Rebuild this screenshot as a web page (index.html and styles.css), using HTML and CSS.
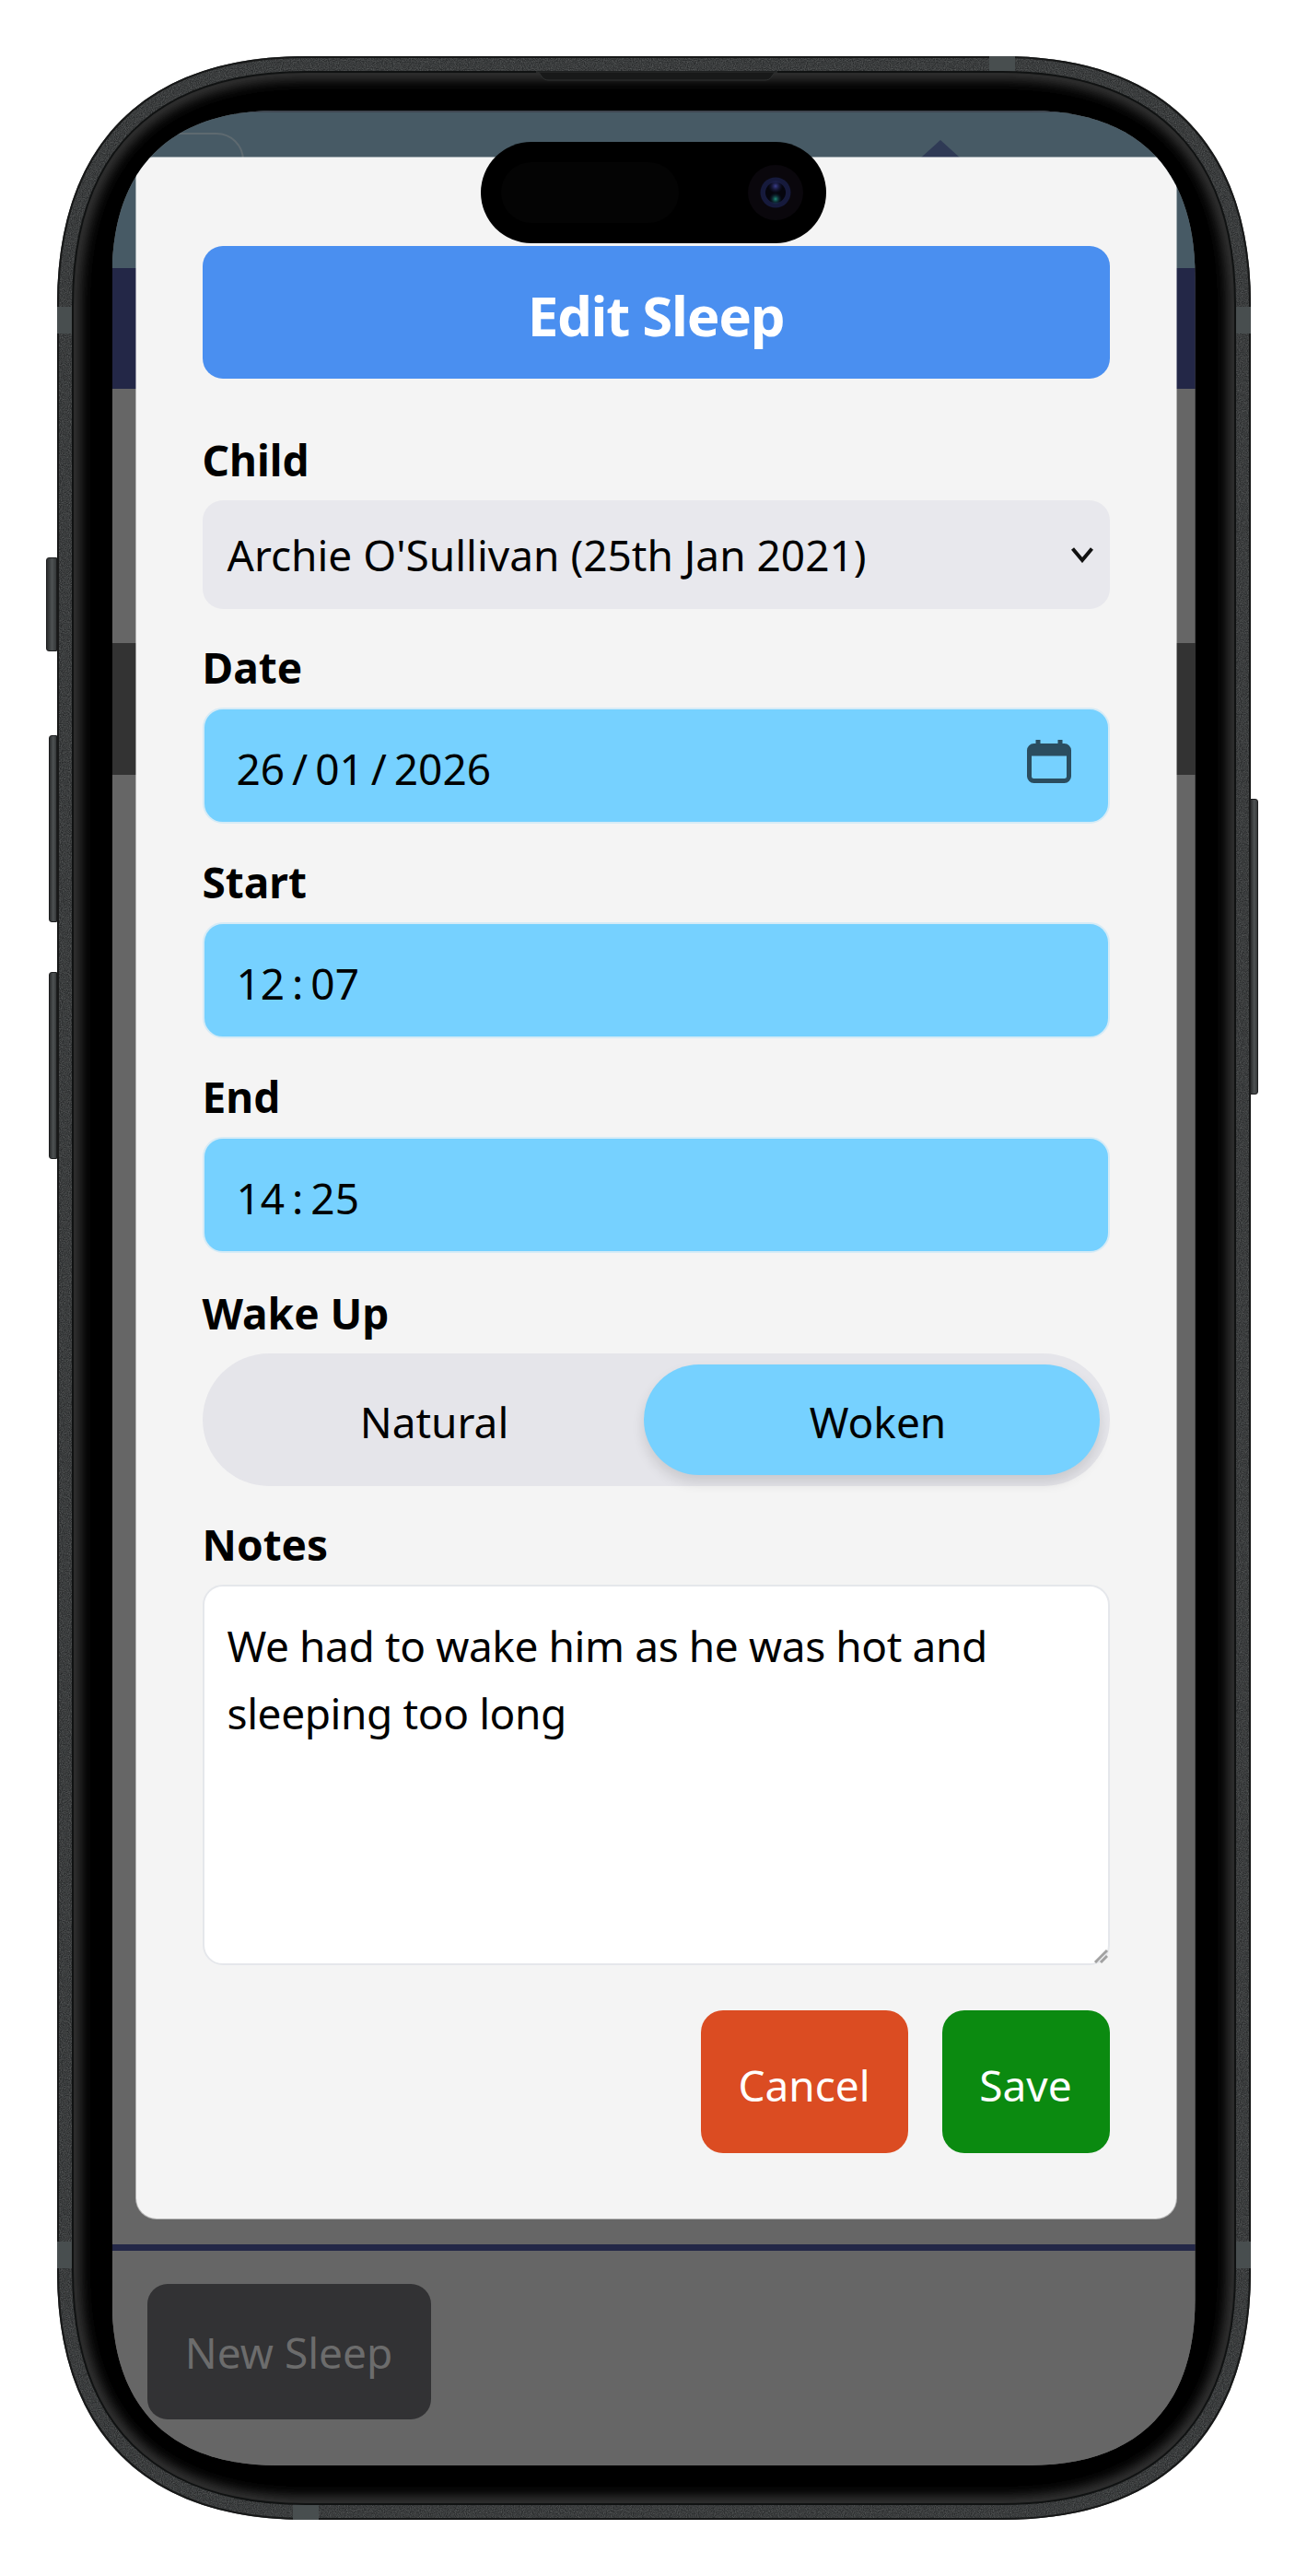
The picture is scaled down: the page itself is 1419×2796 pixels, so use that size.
FILE: index.html
```html
<!DOCTYPE html>
<html lang="en">
<head>
<meta charset="utf-8">
<title>Edit Sleep</title>
<link rel="stylesheet" href="styles.css">
</head>
<body>
<div class="phone">
  <svg class="phone-body" viewBox="0 0 1296 2674" aria-hidden="true">
    <defs>
      <filter id="grain" x="0" y="0" width="100%" height="100%" color-interpolation-filters="sRGB">
        <feTurbulence type="fractalNoise" baseFrequency="0.9" numOctaves="2" seed="4"/>
        <feColorMatrix values="0 0 0 0 0.42  0 0 0 0 0.43  0 0 0 0 0.43  1.1 0 0 0 -0.3"/>
        <feComposite in2="SourceGraphic" operator="in"/>
        <feMerge><feMergeNode in="SourceGraphic"/><feMergeNode/></feMerge>
      </filter>
      <filter id="soft"><feGaussianBlur stdDeviation="7"/></filter>
      <clipPath id="inner-clip"><path transform="translate(17 17)" d="M0 253C0 88 88 0 253 0H1009C1174 0 1262 88 1262 253V2387C1262 2552 1174 2640 1009 2640H253C88 2640 0 2552 0 2387Z"/></clipPath>
    </defs>
    <path class="metal" filter="url(#grain)" d="M0 270C0 95 95 0 270 0H1026C1201 0 1296 95 1296 270V2404C1296 2579 1201 2674 1026 2674H270C95 2674 0 2579 0 2404Z"/>
    <path class="metal-edge" d="M1 270C1 96 96 1 270 1H1026C1200 1 1295 96 1295 270V2404C1295 2578 1200 2673 1026 2673H270C96 2673 1 2578 1 2404Z"/>
    <rect class="band" x="1012" y="0" width="28" height="17"/>
    <rect class="band" x="0" y="272" width="17" height="29"/>
    <rect class="band" x="1279" y="272" width="17" height="29"/>
    <rect class="band" x="0" y="2372" width="17" height="29"/>
    <rect class="band" x="1279" y="2372" width="17" height="29"/>
    <rect class="band" x="256" y="2657" width="28" height="17"/>
    <path class="bezel" transform="translate(17 17)" d="M0 253C0 88 88 0 253 0H1009C1174 0 1262 88 1262 253V2387C1262 2552 1174 2640 1009 2640H253C88 2640 0 2552 0 2387Z"/>
    <g clip-path="url(#inner-clip)">
      <path class="bezel-glow" filter="url(#soft)" transform="translate(17 17)" d="M0 253C0 88 88 0 253 0H1009C1174 0 1262 88 1262 253V2387C1262 2552 1174 2640 1009 2640H253C88 2640 0 2552 0 2387Z"/>
    </g>
    <path class="bezel-line" transform="translate(17 17)" d="M0 253C0 88 88 0 253 0H1009C1174 0 1262 88 1262 253V2387C1262 2552 1174 2640 1009 2640H253C88 2640 0 2552 0 2387Z"/>
    <path class="speaker" d="M520 17C524 17 524 19 526 22C528 25 530 26 534 26H768C772 26 774 25 776 22C778 19 778 17 782 17Z"/>
  </svg>

  <span class="side-key key-mute"></span>
  <span class="side-key key-up"></span>
  <span class="side-key key-down"></span>
  <span class="side-key key-power"></span>

  <div class="screen">
    <div class="app">
      <div class="band-top">
        <span class="ghost-outline"></span>
        <span class="ghost-arrow"></span>
      </div>
      <div class="band-navy"></div>
      <div class="band-grey"></div>
      <div class="band-dark"></div>
      <div class="band-main"></div>
      <div class="band-rule"></div>
      <div class="band-foot">
        <button class="new-btn" type="button">New Sleep</button>
      </div>
    </div>

    <form class="modal">
      <h1 class="modal-title">Edit Sleep</h1>

      <div class="field field-first">
        <div class="label">Child</div>
        <div class="control control-select">
          <span>Archie O'Sullivan (25th Jan 2021)</span>
          <svg class="chevron" viewBox="0 0 24 18" aria-hidden="true"><path d="M1.5 2.5L12 15L22.5 2.5"/></svg>
        </div>
      </div>

      <div class="field">
        <div class="label">Date</div>
        <div class="control control-time">
          <span class="stamp">26 / 01 / 2026</span>
          <svg class="calendar" viewBox="0 0 48 48" aria-hidden="true">
            <path class="cal-ticks" d="M12 1V8M36 1V8"/>
            <rect class="cal-box" x="2.5" y="7.5" width="43" height="38" rx="5"/>
            <path class="cal-head" d="M2.5 12.5C2.5 9.5 5 7.5 8 7.5H40C43 7.5 45.5 9.5 45.5 12.5V18.5H2.5Z"/>
          </svg>
        </div>
      </div>

      <div class="field">
        <div class="label">Start</div>
        <div class="control control-time"><span class="stamp">12 : 07</span></div>
      </div>

      <div class="field">
        <div class="label">End</div>
        <div class="control control-time"><span class="stamp">14 : 25</span></div>
      </div>

      <div class="field field-low">
        <div class="label">Wake Up</div>
        <div class="toggle">
          <span class="toggle-opt">Natural</span>
          <span class="toggle-opt toggle-on">Woken</span>
        </div>
      </div>

      <div class="field">
        <div class="label">Notes</div>
        <div class="notes">
          <p>We had to wake him as he was hot and<br>sleeping too long</p>
          <svg class="grip" viewBox="0 0 16 16" aria-hidden="true"><path d="M15 2L2 15M15 8L8 15"/></svg>
        </div>
      </div>

      <div class="actions">
        <button class="act act-cancel" type="button">Cancel</button>
        <button class="act act-save" type="button">Save</button>
      </div>
    </form>

    <div class="island">
      <span class="island-sensor"></span>
      <svg class="island-cam" viewBox="0 0 60 60" aria-hidden="true">
        <defs>
          <radialGradient id="lens-top" cx="0.5" cy="0.5" r="0.5"><stop offset="0" stop-color="#3b3f8f"/><stop offset="1" stop-color="#14163a" stop-opacity="0"/></radialGradient>
          <radialGradient id="lens-low" cx="0.5" cy="0.5" r="0.5"><stop offset="0" stop-color="#1f8f78"/><stop offset="1" stop-color="#0c1a3a" stop-opacity="0"/></radialGradient>
        </defs>
        <circle cx="30" cy="30" r="30" fill="#0a070c"/>
        <circle cx="30" cy="30" r="16.5" fill="#161a3c"/>
        <circle cx="30" cy="30" r="11" fill="#05050d"/>
        <circle cx="30" cy="23" r="8" fill="url(#lens-top)"/>
        <circle cx="30" cy="37" r="7" fill="url(#lens-low)"/>
      </svg>
    </div>
  </div>
</div>
</body>
</html>
```

FILE: styles.css
```css
* { box-sizing: border-box; }
html, body { margin: 0; padding: 0; background: #fff; }
body { width: 1419px; height: 2796px; overflow: hidden; font-family: "Noto Sans", "Open Sans", sans-serif; color: #000; }

.phone { position: relative; width: 1296px; height: 2674px; margin: 61px 0 0 61.5px; padding: 59px 60px; }
.phone-body { position: absolute; inset: 0; width: 100%; height: 100%; display: block; }
.metal { fill: #2b2d2e; }
.metal-edge { fill: none; stroke: #171818; stroke-width: 2; }
.band { fill: #484e4f; }
.bezel { fill: #000; }
.bezel-glow { fill: none; stroke: #3a3a3a; stroke-width: 16; }
.bezel-line { fill: none; stroke: #101212; stroke-width: 2; }
.speaker { fill: #181919; stroke: #2f3131; stroke-width: 1; }

.side-key { position: absolute; background: linear-gradient(90deg, #2b2d2e, #4e5253 55%, #353839); border: 1px solid #1d1e1f; }
.key-mute { left: -11.5px; top: 544px; width: 12px; height: 102px; border-radius: 3px 0 0 3px; }
.key-up { left: -8.5px; top: 737px; width: 9px; height: 203px; border-radius: 3px 0 0 3px; }
.key-down { left: -8.5px; top: 994px; width: 9px; height: 203px; border-radius: 3px 0 0 3px; }
.key-power { right: -8.5px; top: 806px; width: 9px; height: 321px; border-radius: 0 3px 3px 0; }

.screen { position: relative; width: 1176px; height: 2556px; clip-path: path("M0 180C0 63 63 0 180 0H996C1113 0 1176 63 1176 180V2376C1176 2493 1113 2556 996 2556H180C63 2556 0 2493 0 2376Z"); }

.app { height: 100%; display: flex; flex-direction: column; background: #666; }
.band-top { position: relative; height: 171px; background: #475a65; box-shadow: inset 0 2px 0 #3f4650; }
.ghost-outline { position: absolute; left: 30px; top: 24px; width: 113px; height: 120px; border: 2px solid #5e6a70; border-radius: 30px; }
.ghost-arrow { position: absolute; left: 878px; top: 32px; width: 0; height: 0; border-left: 21px solid transparent; border-right: 21px solid transparent; border-bottom: 19px solid #2f3a55; }
.band-navy { height: 131px; background: #232747; }
.band-grey { height: 276px; background: #666; }
.band-dark { height: 143px; background: #333; }
.band-main { height: 1595px; background: #666; }
.band-rule { height: 7px; background: #232747; }
.band-foot { flex: 1; background: #666; padding: 36px 0 0 38px; }
.new-btn { display: block; width: 308px; height: 147px; padding: 0; border: 0; border-radius: 22px; background: #323234; color: #6c6c6c; font: 400 46px "Noto Sans", sans-serif; }

.modal { position: absolute; left: 26px; top: 51px; width: 1129px; height: 2237px; padding: 96px 72px 0; background: #f4f4f4; border-radius: 18px 18px 22px 22px; box-shadow: 0 0 0 1px rgba(255,255,255,.5); }
.modal-title { margin: 0; height: 144px; padding-top: 6px; display: flex; align-items: center; justify-content: center; background: #4a8ff0; border-radius: 22px; color: #fff; font-size: 60px; font-weight: 700; letter-spacing: -1.3px; }

.field { margin-top: 41px; }
.field-first { margin-top: 66px; }
.field-low { margin-top: 43px; }
.label { height: 58px; margin-bottom: 8px; font-size: 46px; line-height: 44px; font-weight: 700; }

.control { display: flex; align-items: center; justify-content: space-between; border-radius: 22px; font-size: 46px; }
.control-select { height: 118px; padding: 0 18px 0 27px; background: #e8e8ed; }
.chevron { width: 24px; height: 18px; fill: none; stroke: #111; stroke-width: 4; }
.control-time { height: 126px; padding: 6px 40px 0 35px; background: #76d1ff; border: 2px solid #d6ebf6; }
.stamp { word-spacing: -4px; }
.calendar { width: 48px; height: 48px; margin-top: -16px; }
.cal-ticks { fill: none; stroke: #2b4d5f; stroke-width: 5; }
.cal-box { fill: none; stroke: #2b4d5f; stroke-width: 5; }
.cal-head { fill: #2b4d5f; }

.toggle { height: 144px; padding: 12px 11px; display: flex; background: #e5e5ea; border-radius: 72px; font-size: 46px; }
.toggle-opt { flex: 1; display: flex; align-items: center; justify-content: center; border-radius: 60px; padding: 3px 0 0 14px; }
.toggle-opt:first-child { flex: 0 0 468px; }
.toggle-on { background: #76d1ff; box-shadow: 0 8px 14px rgba(0,0,0,.12); }

.notes { position: relative; height: 413px; padding: 28px 25px; background: #fff; border: 2px solid #e5e7eb; border-radius: 22px; font-size: 46px; line-height: 73px; letter-spacing: -0.4px; }
.notes p { margin: 0; }
.grip { position: absolute; right: 0; bottom: 0; width: 16px; height: 16px; fill: none; stroke: #a2a2a2; stroke-width: 3; }

.actions { margin-top: 49px; display: flex; justify-content: flex-end; gap: 37px; }
.act { height: 155px; padding: 6px 0 0; border: 0; border-radius: 24px; color: #fff; font: 400 46px "Noto Sans", sans-serif; }
.act-cancel { width: 225px; background: #db4c22; }
.act-save { width: 182px; background: #0b8a10; }

.island { position: absolute; left: 400.5px; top: 34px; width: 375px; height: 110px; background: #000; border-radius: 55px; }
.island-sensor { position: absolute; left: 22px; top: 22px; width: 193px; height: 66px; background: #040404; border-radius: 33px; }
.island-cam { position: absolute; left: 290px; top: 25px; width: 60px; height: 60px; }
```
